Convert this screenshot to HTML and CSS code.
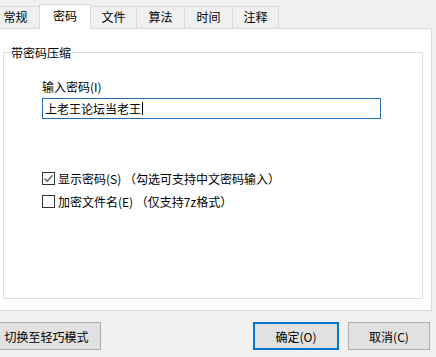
FILE: index.html
```html
<!DOCTYPE html>
<html lang="zh-CN">
<head>
    <meta charset="UTF-8">
    <title>密码</title>
    <link rel="stylesheet" href="styles.css">
</head>
<body>
    <div class="tabs">
        <div class="tab w48">常规</div>
        <div class="tab active">密码</div>
        <div class="tab w46">文件</div>
        <div class="tab w48">算法</div>
        <div class="tab w48">时间</div>
        <div class="tab w46">注释</div>
    </div>

    <div class="panel">
        <fieldset class="group">
            <legend>带密码压缩</legend>
            <div class="group-body">
                <div class="label">输入密码(I)</div>
                <div class="textbox">上老王论坛当老王<span class="caret"></span></div>

                <div class="checks">
                    <div class="check-row">
                        <span class="box">
                            <svg width="11" height="11" viewBox="0 0 11 11"><path d="M1.5 5.5 L4.2 8.3 L9.6 2.2" fill="none" stroke="#555" stroke-width="1.3"/></svg>
                        </span>
                        <span>显示密码(S) （勾选可支持中文密码输入）</span>
                    </div>
                    <div class="check-row">
                        <span class="box"></span>
                        <span>加密文件名(E) （仅支持7z格式）</span>
                    </div>
                </div>
            </div>
        </fieldset>
    </div>

    <div class="footer">
        <button class="btn btn-mode">切换至轻巧模式</button>
        <div class="spacer"></div>
        <button class="btn btn-ok">确定(O)</button>
        <button class="btn btn-cancel">取消(C)</button>
    </div>
</body>
</html>
```

FILE: styles.css
```css
body {
    margin: 0;
    background: #f0f0f0;
    font-family: "Noto Sans CJK SC", "Noto Sans", sans-serif;
    font-size: 12px;
    color: #000;
    overflow: hidden;
}
.tabs {
    display: flex;
    align-items: flex-end;
    height: 28px;
    margin-left: -9px;
}
.tab {
    box-sizing: border-box;
    height: 22px;
    line-height: 20px;
    text-align: center;
    background: #f0f0f0;
    border: 1px solid #d9d9d9;
    border-bottom: none;
    margin-right: -1px;
}
.w48 { width: 49px; }
.w46 { width: 47px; }
.tab.active {
    width: 52px;
    height: 25px;
    line-height: 22px;
    background: #fff;
    position: relative;
    z-index: 1;
    margin-bottom: -1px;
    border-color: #d9d9d9;
}
.panel {
    box-sizing: border-box;
    width: 435px;
    height: 283px;
    margin-left: -3px;
    background: #fff;
    border: 1px solid #d9d9d9;
    padding: 15px 8px 11px 5px;
}
.group {
    box-sizing: border-box;
    height: 255px;
    margin: 0;
    padding: 0 0 0 6px;
    border: 1px solid #dcdcdc;
}
.group legend {
    padding: 0 1px;
    line-height: 17px;
}
.group-body {
    padding-left: 32px;
    padding-top: 17px;
}
.label {
    line-height: 17px;
    height: 17px;
}
.textbox {
    box-sizing: border-box;
    width: 339px;
    height: 21px;
    margin-top: 3px;
    border: 1px solid #1e6fb7;
    padding-left: 2px;
    line-height: 19px;
    display: flex;
    align-items: center;
}
.caret {
    display: inline-block;
    width: 1px;
    height: 13px;
    background: #000;
    margin-left: 1px;
}
.checks {
    margin-top: 51px;
    display: flex;
    flex-direction: column;
    gap: 6px;
}
.check-row {
    display: flex;
    align-items: center;
    height: 17px;
    gap: 3px;
}
.box {
    box-sizing: border-box;
    width: 13px;
    height: 13px;
    border: 1px solid #333;
    background: #fff;
    display: flex;
    align-items: center;
    justify-content: center;
}
.footer {
    display: flex;
    margin-top: 11px;
    height: 28px;
}
.spacer {
    flex: 1;
}
.btn {
    box-sizing: border-box;
    height: 28px;
    background: #e1e1e1;
    border: 1px solid #adadad;
    font-family: inherit;
    font-size: 12px;
    color: #000;
    padding: 0;
}
.btn-mode {
    width: 109px;
    margin-left: -8px;
}
.btn-ok {
    width: 86px;
    border: 2px solid #0078d7;
}
.btn-cancel {
    width: 82px;
    margin-left: 9px;
    margin-right: 6px;
}
```
